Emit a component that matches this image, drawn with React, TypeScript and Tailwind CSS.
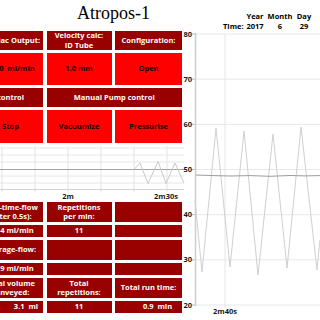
import clsx from 'clsx';
import type { ReactNode } from 'react';

type Tone = 'dark' | 'bright';

function Cell({ children, tone = 'dark', className }: { children?: ReactNode; tone?: Tone; className?: string }) {
  return (
    <div
      className={clsx(
        'flex items-center justify-center whitespace-pre text-center font-bold leading-[9.5px]',
        tone === 'dark' ? 'bg-[#990000] text-white' : 'bg-[#ff0000] text-[#1a0000]',
        className,
      )}
    >
      {children}
    </div>
  );
}

const rowGrid = 'grid grid-cols-[65px_65px_67px] gap-x-[3.5px]';

// y positions of the big chart gridlines, 80 down to 20
const bigTicks = [80, 70, 60, 50, 40, 30, 20].map((v, i) => ({ v, y: 34 + i * 45.17 }));

function SmallChart() {
  return (
    <svg width={206} height={53} viewBox="-22 146 206 53" className="overflow-visible">
      {[148, 155, 162, 176, 183].map((y) => (
        <line key={y} x1={-22} x2={184} y1={y} y2={y} stroke="#e6e6e6" strokeWidth={1} />
      ))}
      {[2, 35, 68, 101, 134, 167].map((x) => (
        <line key={x} x1={x} x2={x} y1={146} y2={192} stroke="#e3e3e3" strokeWidth={1} />
      ))}
      <line x1={-22} x2={184} y1={189.5} y2={189.5} stroke="#d2d2d2" strokeWidth={1} />
      <line x1={-22} x2={184} y1={169.5} y2={169.5} stroke="#a3a3a3" strokeWidth={1} />
      <polyline
        points="134,169.5 140,163 148,183.5 158,161.5 166,183.5 175,163 184,183"
        fill="none"
        stroke="#c9c9c9"
        strokeWidth={1}
      />
      <text x={68} y={199} textAnchor="middle" className="fill-[#1a1a1a] text-[7.5px] font-bold">
        2m
      </text>
      <text x={166} y={199} textAnchor="middle" className="fill-[#1a1a1a] text-[7.5px] font-bold">
        2m30s
      </text>
    </svg>
  );
}

function BigChart() {
  return (
    <svg width={138} height={292} viewBox="182 28 138 292" className="shrink-0">
      {bigTicks.map((t) => (
        <g key={t.v}>
          <line x1={195} x2={320} y1={t.y} y2={t.y} stroke="#e8e8e8" strokeWidth={1} />
          <line x1={192} x2={195} y1={t.y} y2={t.y} stroke="#bdbdbd" strokeWidth={1} />
          <text x={192} y={t.y + 2.6} textAnchor="end" className="fill-[#1a1a1a] text-[7.5px] font-bold">
            {t.v}
          </text>
        </g>
      ))}
      <line x1={225} x2={225} y1={34} y2={308} stroke="#e6e6e6" strokeWidth={1} />
      <line x1={195.5} x2={195.5} y1={33} y2={306} stroke="#cdcdcd" strokeWidth={1.5} />
      <polyline
        points="195,200 202,272 216,128 230,267 244,131 258,275 273,134 287,268 301,127 317,270 320,240"
        fill="none"
        stroke="#d0d0d0"
        strokeWidth={1}
      />
      <polyline
        points="196,175 210,175.5 230,176 250,175.6 270,176.3 290,175.5 305,175.9 320,175.6"
        fill="none"
        stroke="#9c9c9c"
        strokeWidth={1}
      />
      <text x={225} y={314} textAnchor="middle" className="fill-[#1a1a1a] text-[7.5px] font-bold">
        2m40s
      </text>
    </svg>
  );
}

export default function App() {
  return (
    <div className="flex h-[320px] w-[320px] flex-col overflow-hidden bg-white font-['Open_Sans',sans-serif] text-[7.5px]">
      {/* Title and date */}
      <header className="flex h-[28px] shrink-0 items-start">
        <span className="ml-[77px] mt-[4px] font-['Liberation_Serif',serif] text-[18px] leading-none text-black">
          Atropos-1
        </span>
        <div className="ml-auto mr-[6px] mt-[11px] grid grid-cols-[21px_22px_28px_20px] font-bold leading-[10px] text-black">
          <span />
          <span className="text-center">Year</span>
          <span className="text-center">Month</span>
          <span className="text-center">Day</span>
          <span className="pr-[2px] text-right">Time:</span>
          <span className="text-center">2017</span>
          <span className="text-center">6</span>
          <span className="text-center">29</span>
        </div>
      </header>

      <div className="flex">
        {/* Control panel */}
        <div className="ml-[-22px] flex w-[204px] shrink-0 flex-col gap-[3px] pt-[3px]">
          <div className={clsx(rowGrid, 'h-[19px]')}>
            <Cell>Cardiac Output:</Cell>
            <Cell>{'Velocity calc:\nID Tube'}</Cell>
            <Cell>Configuration:</Cell>
          </div>
          <div className={clsx(rowGrid, 'h-[32px]')}>
            <Cell tone="bright">{'5000  ml/min'}</Cell>
            <Cell tone="bright">1.0 mm</Cell>
            <Cell tone="bright">Open</Cell>
          </div>
          <div className={clsx(rowGrid, 'h-[19px]')}>
            <Cell>control</Cell>
            <Cell className="col-span-2">Manual Pump control</Cell>
          </div>
          <div className={clsx(rowGrid, 'h-[33px]')}>
            <Cell tone="bright">Stop</Cell>
            <Cell tone="bright">Vacuumize</Cell>
            <Cell tone="bright">Pressurise</Cell>
          </div>

          <SmallChart />

          <div className={clsx(rowGrid, 'h-[20px]')}>
            <Cell>{'Real-time-flow\n(filter 0.5s):'}</Cell>
            <Cell>{'Repetitions\nper min:'}</Cell>
            <Cell />
          </div>
          <div className={clsx(rowGrid, 'h-[12px]')}>
            <Cell>{'5014 ml/min'}</Cell>
            <Cell>11</Cell>
            <Cell />
          </div>
          <div className={clsx(rowGrid, 'h-[20px]')}>
            <Cell>Average-flow:</Cell>
            <Cell />
            <Cell />
          </div>
          <div className={clsx(rowGrid, 'h-[12px]')}>
            <Cell>{'4989 ml/min'}</Cell>
            <Cell />
            <Cell />
          </div>
          <div className={clsx(rowGrid, 'h-[20px]')}>
            <Cell>{'Total volume\nconveyed:'}</Cell>
            <Cell>{'Total\nrepetitions:'}</Cell>
            <Cell>Total run time:</Cell>
          </div>
          <div className={clsx(rowGrid, 'h-[12px]')}>
            <Cell className="pl-[31px]">{'3.1  ml'}</Cell>
            <Cell>11</Cell>
            <Cell className="pl-[18px]">{'0.9  min'}</Cell>
          </div>
        </div>

        <BigChart />
      </div>
    </div>
  );
}
